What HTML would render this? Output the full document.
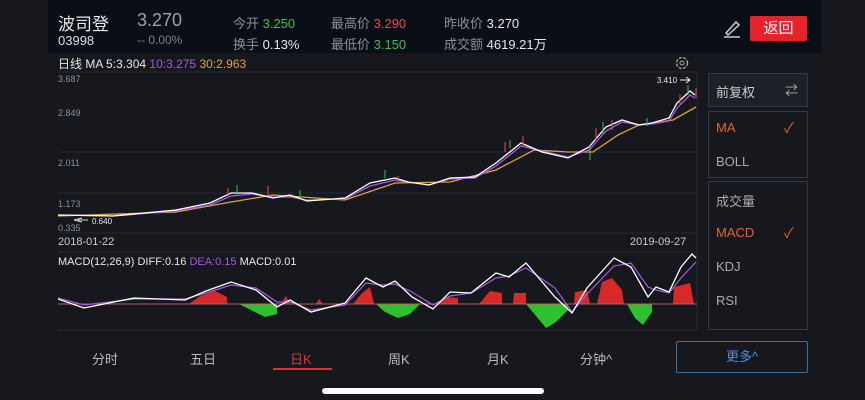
<!DOCTYPE html>
<html><head><meta charset="utf-8"><style>
body{margin:0;width:865px;height:400px;background:#16181e;font-family:"Liberation Sans","Noto Sans CJK SC",sans-serif;color:#ccc;position:relative;overflow:hidden}
.a{position:absolute;white-space:nowrap}
.g{color:#8a8f99}.w{color:#e8e8e8}
</style></head><body>
<div class="a" style="left:48px;top:0;width:774px;height:53px;background:#0a0e16"></div>
<div class="a w" style="left:58px;top:10px;font-size:17px">波司登</div>
<div class="a" style="left:58px;top:33px;font-size:13px;color:#ddd">03998</div>
<div class="a" style="left:137px;top:10px;font-size:18px;color:#9aa0aa">3.270</div>
<div class="a" style="left:137px;top:33px;font-size:12px;color:#7b8089">-- 0.00%</div>
<div class="a g" style="left:233px;top:13px;font-size:13px">今开 <span style="color:#3dbd4c">3.250</span></div>
<div class="a g" style="left:233px;top:34px;font-size:13px">换手 <span class="w">0.13%</span></div>
<div class="a g" style="left:331px;top:13px;font-size:13px">最高价 <span style="color:#e84a4a">3.290</span></div>
<div class="a g" style="left:331px;top:34px;font-size:13px">最低价 <span style="color:#3dbd4c">3.150</span></div>
<div class="a g" style="left:444px;top:13px;font-size:13px">昨收价 <span class="w">3.270</span></div>
<div class="a g" style="left:444px;top:34px;font-size:13px">成交额 <span class="w">4619.21万</span></div>
<svg class="a" style="left:722px;top:18px" width="20" height="20"><path d="M4 15L14 4l3 3L6 17z" fill="none" stroke="#ccc" stroke-width="1.5"/><path d="M2 19h16" stroke="#ccc" stroke-width="1.5"/></svg>
<div class="a" style="left:750px;top:16px;width:57px;height:25px;background:#e6232a;border-radius:2px;color:#fff;font-size:15px;text-align:center;line-height:25px">返回</div>
<div class="a w" style="left:58px;top:55px;font-size:12px">日线 MA 5:3.304 <span style="color:#a45ae0">10:3.275</span> <span style="color:#e0a23a">30:2.963</span></div>
<svg class="a" style="left:674px;top:55px" width="16" height="16"><circle cx="8" cy="8" r="5.5" fill="none" stroke="#aaa" stroke-width="1.3" stroke-dasharray="3 1.5"/><circle cx="8" cy="8" r="2" fill="none" stroke="#aaa"/></svg>
<svg class="a" style="left:0;top:0" width="865" height="400">
<g stroke="#252932" stroke-width="1"><line x1="58" y1="72" x2="697" y2="72"/><line x1="58" y1="152" x2="697" y2="152"/><line x1="58" y1="193" x2="697" y2="193"/><line x1="58" y1="233" x2="697" y2="233"/><line x1="58" y1="252" x2="697" y2="252"/><line x1="58" y1="330" x2="697" y2="330"/><line x1="697" y1="72" x2="697" y2="330"/></g>
<polygon fill="#d82828" points="189,304 200,296 215,291 227,297 227,304"/>
<polygon fill="#d82828" points="281,304 286,296 290,304"/>
<polygon fill="#d82828" points="316,304 319,299 323,304"/>
<polygon fill="#d82828" points="353,304 362,293 370,287 374,304"/>
<polygon fill="#d82828" points="437,304 445,297 458,298 458,304"/>
<polygon fill="#d82828" points="479,304 490,291 502,293 502,304"/>
<polygon fill="#d82828" points="513,304 514,293 526,293 526,304"/>
<polygon fill="#d82828" points="574,304 575,292 587,290 590,304"/>
<polygon fill="#d82828" points="597,304 602,282 612,278 622,290 624,304"/>
<polygon fill="#d82828" points="673,304 674,287 690,283 694,304"/>
<polygon fill="#2ec02e" points="239,304 255,312 265,317 277,314 277,304"/>
<polygon fill="#2ec02e" points="376,304 385,312 398,318 410,314 420,304"/>
<polygon fill="#2ec02e" points="526,304 536,316 546,328 556,322 568,310 568,304"/>
<polygon fill="#2ec02e" points="627,304 635,318 643,325 652,312 652,304"/>
<line x1="58" y1="304" x2="697" y2="304" stroke="#b06060"/>
<polyline fill="none" stroke="#a45ae0" stroke-width="1.2" points="58,298 84,305 134,299 185,299 206,293 231,285 256,288 277,302 290,302 311,310 345,305 366,283 383,285 395,284 412,292 433,305 450,296 471,293 496,278 509,276 526,268 555,288 572,312 587,294 614,266 631,263 648,287 656,290 669,293 681,278 696,262"/>
<polyline fill="none" stroke="#fff" stroke-width="1.3" points="58,299 84,308 134,298 185,300 206,291 231,282 256,290 277,307 290,300 311,312 345,303 366,278 383,287 395,281 412,297 433,309 450,292 471,293 496,273 509,277 526,263 555,297 572,313 587,288 614,258 631,267 648,297 656,287 669,292 681,267 692,254 696,258"/>
<polyline fill="none" stroke="#e0a23a" stroke-width="1.3" points="58,216 176,212 231,202 273,195 345,200 395,183 450,182 496,170 534,150 568,152 593,152 618,135 639,125 673,120 696,107"/>
<polyline fill="none" stroke="#a45ae0" stroke-width="1.3" points="58,215 113,216 176,211 210,205 231,196 252,194 273,197 290,197 307,200 345,199 370,186 395,180 408,182 429,185 450,179 475,178 496,166 521,146 542,151 568,157 589,150 606,131 622,122 639,125 652,124 669,121 677,108 690,95 695,98"/>
<polyline fill="none" stroke="#fff" stroke-width="1.3" points="58,215 113,216 176,210 210,203 231,193 252,193 273,198 290,195 307,201 345,198 370,183 395,178 408,182 429,185 450,178 475,177 496,163 521,143 542,152 568,158 589,147 606,127 622,120 639,125 652,123 669,118 677,103 690,91 695,95"/>
<g stroke-width="1"><path d="M237 195v-10M300 198v-8M385 178v-8M510 148v-8M590 160v-14M603 134v-12M647 126v-8M688 95v-10" stroke="#3dbd4c"/><path d="M228 196v-8M268 196v-10M398 182v-6M505 152v-10M523 146v-10M596 140v-12M612 130v-10M680 104v-10M696 98v-10" stroke="#e84a4a"/></g>
<path d="M82 222L74 220 82 218M88 220H78" stroke="#ddd" fill="none"/>
<path d="M680 80H690M686 77l4 3-4 3" stroke="#eee" fill="none"/>
<rect x="322" y="388" width="222" height="6" rx="3" fill="#fff"/>
<line x1="273" y1="369" x2="332" y2="369" stroke="#d33" stroke-width="2"/>
</svg>
<div class="a g" style="left:58px;top:74px;font-size:9px">3.687</div>
<div class="a g" style="left:58px;top:108px;font-size:9px">2.849</div>
<div class="a g" style="left:58px;top:158px;font-size:9px">2.011</div>
<div class="a g" style="left:58px;top:199px;font-size:9px">1.173</div>
<div class="a g" style="left:58px;top:223px;font-size:9px">0.335</div>
<div class="a w" style="left:92px;top:217px;font-size:8px">0.640</div>
<div class="a w" style="left:657px;top:76px;font-size:8px">3.410</div>
<div class="a" style="left:58px;top:236px;font-size:11px;color:#ccc">2018-01-22</div>
<div class="a" style="left:630px;top:236px;font-size:11px;color:#ccc">2019-09-27</div>
<div class="a w" style="left:58px;top:256px;font-size:11px">MACD(12,26,9) DIFF:0.16 <span style="color:#a45ae0">DEA:0.15</span> MACD:0.01</div>
<div class="a" style="left:708px;top:73px;width:98px;height:32px;border:1px solid #333842;background:#1d2027"></div>
<div class="a" style="left:716px;top:82px;font-size:13px;color:#ccc">前复权</div>
<div class="a" style="left:785px;top:80px;font-size:13px;color:#aaa">⇄</div>
<div class="a" style="left:708px;top:111px;width:98px;height:65px;border:1px solid #333842"></div>
<div class="a" style="left:716px;top:120px;font-size:13px;color:#e0643a">MA</div>
<div class="a" style="left:784px;top:118px;font-size:14px;color:#e0643a">✓</div>
<div class="a" style="left:716px;top:154px;font-size:13px;color:#aaa">BOLL</div>
<div class="a" style="left:708px;top:181px;width:98px;height:147px;border:1px solid #333842"></div>
<div class="a" style="left:716px;top:191px;font-size:13px;color:#aaa">成交量</div>
<div class="a" style="left:716px;top:225px;font-size:13px;color:#e0643a">MACD</div>
<div class="a" style="left:784px;top:223px;font-size:14px;color:#e0643a">✓</div>
<div class="a" style="left:716px;top:259px;font-size:13px;color:#aaa">KDJ</div>
<div class="a" style="left:716px;top:293px;font-size:13px;color:#aaa">RSI</div>
<div class="a" style="left:92px;top:349px;font-size:13px;color:#bbb">分时</div>
<div class="a" style="left:190px;top:349px;font-size:13px;color:#bbb">五日</div>
<div class="a" style="left:290px;top:349px;font-size:13px;color:#d33">日K</div>
<div class="a" style="left:388px;top:349px;font-size:13px;color:#bbb">周K</div>
<div class="a" style="left:487px;top:349px;font-size:13px;color:#bbb">月K</div>
<div class="a" style="left:580px;top:349px;font-size:13px;color:#bbb">分钟^</div>
<div class="a" style="left:676px;top:341px;width:130px;height:30px;border:1px solid #3a6fa8;border-radius:2px;color:#4a90e0;font-size:13px;text-align:center;line-height:30px">更多^</div>
</body></html>
